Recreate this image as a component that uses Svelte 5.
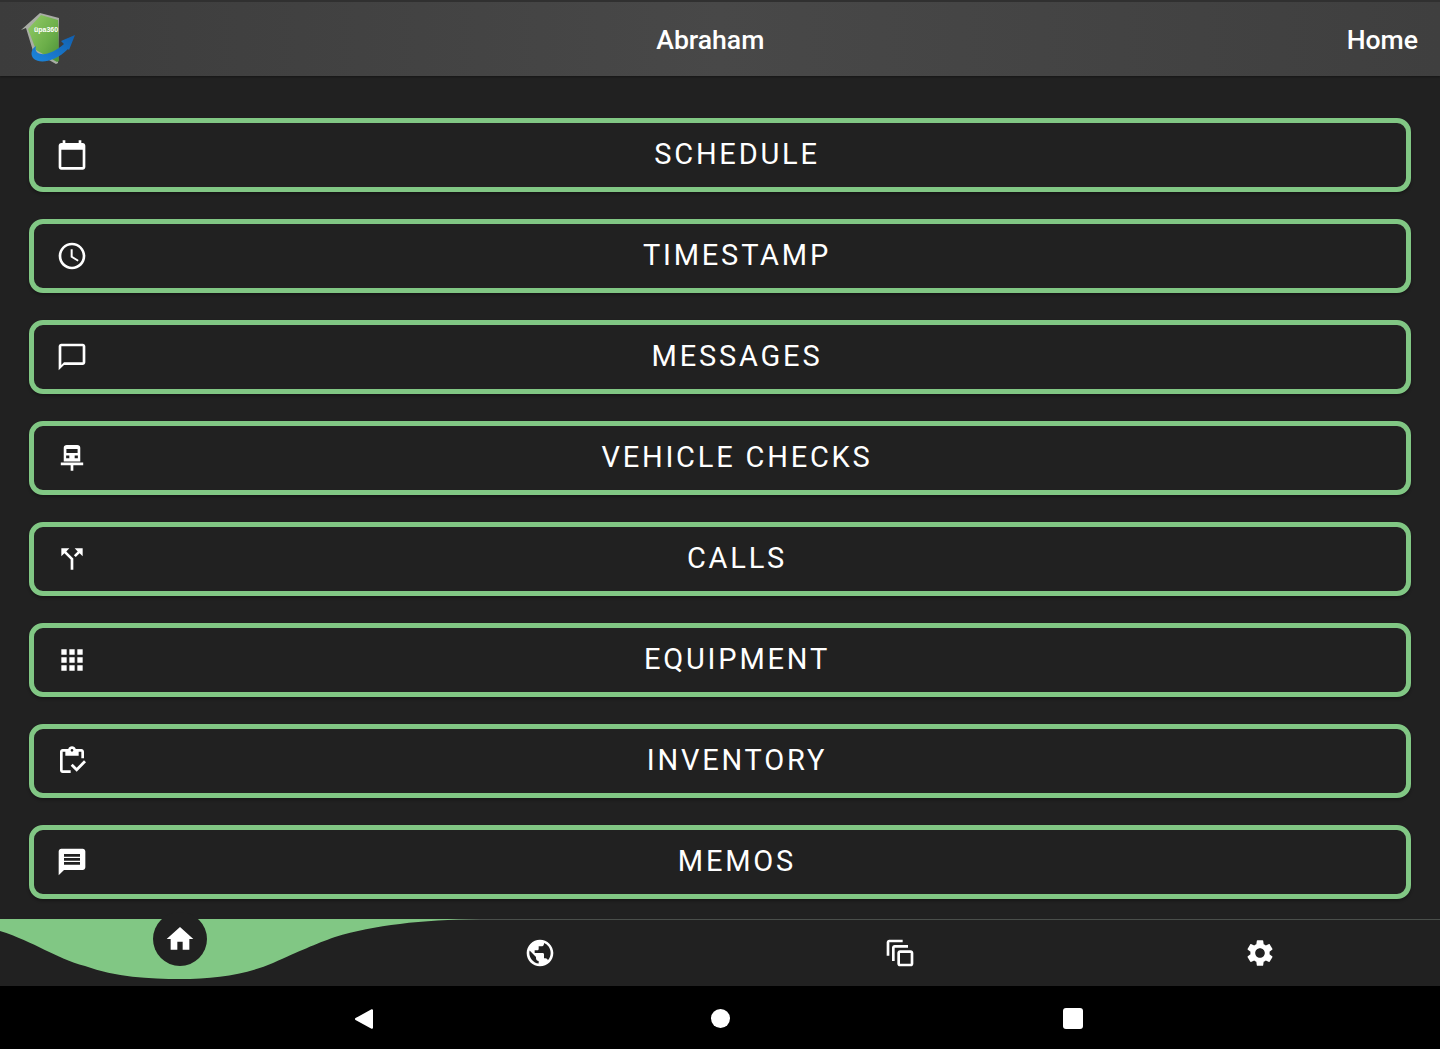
<script>
  const rows = [
    { label: 'SCHEDULE', d: 'M20 3h-1V1h-2v2H7V1H5v2H4c-1.1 0-2 .9-2 2v16c0 1.1.9 2 2 2h16c1.1 0 2-.9 2-2V5c0-1.1-.9-2-2-2zm0 18H4V8h16v13z' },
    { label: 'TIMESTAMP', d: 'M11.99 2C6.47 2 2 6.48 2 12s4.47 10 9.99 10C17.52 22 22 17.52 22 12S17.52 2 11.99 2zM12 20c-4.42 0-8-3.58-8-8s3.58-8 8-8 8 3.58 8 8-3.58 8-8 8zm.5-13H11v6l5.25 3.15.75-1.23-4.5-2.67z' },
    { label: 'MESSAGES', d: 'M20 2H4c-1.1 0-2 .9-2 2v18l4-4h14c1.1 0 2-.9 2-2V4c0-1.1-.9-2-2-2zm0 14H6l-2 2V4h16v12z' },
    { label: 'VEHICLE CHECKS', d: 'M8 2.3h8c1.2 0 2.2.8 2.2 2V14.7H5.8V4.3c0-1.2 1-2 2.2-2zM7.8 5.3v3h8.4v-3zM7.6 10.2v1.9h2.4v-1.9zM14 10.2v1.9h2.4v-1.9zM3.6 15.4h16.8v2h-7.4v4.2h-2v-4.2H3.6z' },
    { label: 'CALLS', d: 'M14 4l2.29 2.29-2.88 2.88 1.42 1.42 2.88-2.88L20 10V4zm-4 0H4v6l2.29-2.29 4.71 4.7V20h2v-8.41l-5.29-5.3z' },
    { label: 'EQUIPMENT', d: 'M4 8h4V4H4v4zm6 12h4v-4h-4v4zm-6 0h4v-4H4v4zm0-6h4v-4H4v4zm6 0h4v-4h-4v4zm6-10v4h4V4h-4zm-6 4h4V4h-4v4zm6 6h4v-4h-4v4zm0 6h4v-4h-4v4z' },
    { label: 'INVENTORY', d: 'M5 5h2v3h10V5h2v5h2V5c0-1.1-.9-2-2-2h-4.18C14.4 1.84 13.3 1 12 1s-2.4.84-2.82 2H5c-1.1 0-2 .9-2 2v14c0 1.1.9 2 2 2h6v-2H5V5zm7-2c.55 0 1 .45 1 1s-.45 1-1 1-1-.45-1-1 .45-1 1-1zM21 11.5L15.51 17l-3.01-3-1.5 1.5 4.51 4.5 6.99-7z' },
    { label: 'MEMOS', d: 'M20 2H4c-1.1 0-1.99.9-1.99 2L2 22l4-4h14c1.1 0 2-.9 2-2V4c0-1.1-.9-2-2-2zm-2 12H6v-2h12v2zm0-3H6V9h12v2zm0-3H6V6h12v2z' }
  ];
  const tabs = [
    { d: 'M12 2C6.48 2 2 6.48 2 12s4.48 10 10 10 10-4.48 10-10S17.52 2 12 2zm-1 17.93c-3.95-.49-7-3.85-7-7.93 0-.62.08-1.21.21-1.79L9 15v1c0 1.1.9 2 2 2v1.93zm6.9-2.54c-.26-.81-1-1.39-1.9-1.39h-1v-3c0-.55-.45-1-1-1H8v-2h2c.55 0 1-.45 1-1V7h2c1.1 0 2-.9 2-2v-.41c2.93 1.19 5 4.06 5 7.41 0 2.08-.8 3.97-2.1 5.39z' },
    { d: 'M14 2H4c-1.1 0-2 .9-2 2v10h2V4h10V2zm4 4H8c-1.1 0-2 .9-2 2v10h2V8h10V6zm2 4h-8c-1.1 0-2 .9-2 2v8c0 1.1.9 2 2 2h8c1.1 0 2-.9 2-2v-8c0-1.1-.9-2-2-2zm0 10h-8v-8h8v8z' },
    { d: 'M19.14 12.94c.04-.3.06-.61.06-.94 0-.32-.02-.64-.07-.94l2.03-1.58c.18-.14.23-.41.12-.61l-1.92-3.32c-.12-.22-.37-.29-.59-.22l-2.39.96c-.5-.38-1.03-.7-1.62-.94l-.36-2.54c-.04-.24-.24-.41-.48-.41h-3.84c-.24 0-.43.17-.47.41l-.36 2.54c-.59.24-1.13.57-1.62.94l-2.39-.96c-.22-.08-.47 0-.59.22L2.74 8.87c-.12.21-.08.47.12.61l2.03 1.58c-.05.3-.09.63-.09.94s.02.64.07.94l-2.03 1.58c-.18.14-.23.41-.12.61l1.92 3.32c.12.22.37.29.59.22l2.39-.96c.5.38 1.03.7 1.62.94l.36 2.54c.05.24.24.41.48.41h3.84c.24 0 .44-.17.47-.41l.36-2.54c.59-.24 1.13-.56 1.62-.94l2.39.96c.22.08.47 0 .59-.22l1.92-3.32c.12-.22.07-.47-.12-.61l-2.01-1.58zM12 15.6c-1.98 0-3.6-1.62-3.6-3.6s1.62-3.6 3.6-3.6 3.6 1.62 3.6 3.6-1.62 3.6-3.6 3.6z' }
  ];
</script>

<div class="screen">
  <header class="toolbar">
    <svg class="logo" viewBox="20 11 56 56" width="56" height="56" aria-hidden="true">
      <defs>
        <linearGradient id="shield" x1="0" y1="0" x2="1" y2="1">
          <stop offset="0" stop-color="#93cb66" />
          <stop offset="0.6" stop-color="#6bae49" />
          <stop offset="1" stop-color="#4a8f38" />
        </linearGradient>
        <linearGradient id="swoosh" x1="0" y1="1" x2="1" y2="0">
          <stop offset="0" stop-color="#1c86dc" />
          <stop offset="1" stop-color="#125fae" />
        </linearGradient>
      </defs>
      <path d="M40 13 L21 30 L26 28 L33 51 L56 64 L58 63 L59 18 Z" fill="#a9ada5" />
      <path d="M41 15 L58 20 L59 61 L57 62 L36 50 L28 29 Z" fill="url(#shield)" />
      <text x="34" y="32" class="logo-text">üpa360</text>
      <path d="M75 35 L61 41 L64 44 C56 51 47 55 41 54 C36 53 35 50 36 46 C31 49 30 55 34 59 C40 64 55 62 68 49 L69 50 Z" fill="url(#swoosh)" />
    </svg>
    <div class="title">Abraham</div>
    <div class="action">Home</div>
  </header>

  <main class="list">
    {#each rows as row}
      <button class="row" type="button">
        <svg class="icon" viewBox="0 0 24 24" aria-hidden="true"><path d={row.d} /></svg>
        <span class="label">{row.label}</span>
      </button>
    {/each}
  </main>

  <nav class="tabs">
    <svg class="wave" viewBox="0 0 480 67" width="480" height="67" aria-hidden="true">
      <path d="M0 0H480C420 1 375 6 335 18C315 25 300 32 273 44C245 56 215 60 180 60C150 60 115 58 85 47C55 39 35 23 0 12Z" />
    </svg>
    <div class="tab">
      <div class="home">
        <svg class="icon" viewBox="0 0 24 24" aria-hidden="true"><path d="M10 20v-6h4v6h5v-8h3L12 3 2 12h3v8z" /></svg>
      </div>
    </div>
    {#each tabs as tab}
      <div class="tab">
        <svg class="icon" viewBox="0 0 24 24" aria-hidden="true"><path d={tab.d} /></svg>
      </div>
    {/each}
  </nav>

  <div class="system">
    <div class="sys-slot left">
      <svg viewBox="0 0 20 22" width="20" height="22" aria-hidden="true"><path d="M18 2.2 V19.8 L2 11 Z" fill="#fff" stroke="#fff" stroke-width="2" stroke-linejoin="round" /></svg>
    </div>
    <div class="sys-circle"></div>
    <div class="sys-slot right"><div class="sys-square"></div></div>
  </div>
</div>

<style>
  :global(body) {
    margin: 0;
    background: #212121;
  }
  .screen {
    width: 1440px;
    height: 1049px;
    display: flex;
    flex-direction: column;
    overflow: hidden;
    background: #212121;
    font-family: Roboto, "Liberation Sans", sans-serif;
    color: #fff;
  }
  .toolbar {
    height: 74px;
    flex: none;
    display: flex;
    align-items: center;
    padding-right: 22px;
    padding-left: 20px;
    border-top: 2px solid #303030;
    background: linear-gradient(90deg, #3c3c3c 0%, #484848 50%, #3f3f3f 100%);
    box-shadow: 0 1px 2px rgba(0, 0, 0, 0.35);
    position: relative;
    z-index: 1;
  }
  .logo {
    flex: none;
  }
  .logo-text {
    font-family: "Liberation Sans", sans-serif;
    font-size: 7px;
    font-weight: 700;
    fill: #fff;
  }
  .title {
    flex: 1;
    padding-right: 2px;
    text-align: center;
    font-size: 26.6px;
    font-weight: 500;
  }
  .action {
    font-size: 26.6px;
    font-weight: 500;
  }
  .list {
    flex: 1;
    min-height: 0;
    display: flex;
    flex-direction: column;
    gap: 27px;
    padding: 42px 29px 0;
  }
  .row {
    flex: none;
    height: 73.95px;
    box-sizing: border-box;
    display: flex;
    align-items: center;
    padding: 0 20.5px 0 21.5px;
    background: transparent;
    border: 5px solid #81c784;
    border-radius: 14px;
    box-shadow: 0 2px 3px rgba(0, 0, 0, 0.3);
    color: #fff;
    font: inherit;
  }
  .icon {
    width: 32px;
    height: 32px;
    flex: none;
    fill: #fff;
    fill-rule: evenodd;
    display: block;
  }
  .label {
    flex: 1;
    text-align: center;
    font-size: 29px;
    letter-spacing: 2.8px;
    line-height: 1;
    padding-bottom: 1px;
    padding-left: 1px;
  }
  .tabs {
    height: 66px;
    flex: none;
    border-top: 1px solid #4a4f4b;
    display: grid;
    grid-template-columns: repeat(4, 1fr);
    align-items: center;
    justify-items: center;
    position: relative;
  }
  .wave {
    position: absolute;
    left: 0;
    top: -1px;
  }
  .wave path {
    fill: #81c784;
  }
  .tab {
    position: relative;
  }
  .home {
    width: 54px;
    height: 54px;
    border-radius: 50%;
    background: #212121;
    display: flex;
    align-items: center;
    justify-content: center;
    transform: translateY(-14px);
  }
  .system {
    height: 63px;
    box-sizing: border-box;
    padding-top: 2px;
    flex: none;
    background: #000;
    display: grid;
    grid-template-columns: 1fr auto 1fr;
    align-items: center;
  }
  .sys-slot {
    display: flex;
    align-items: center;
  }
  .sys-slot.left {
    justify-content: flex-end;
    padding-right: 336px;
  }
  .sys-slot.right {
    justify-content: flex-start;
    padding-left: 333px;
  }
  .sys-circle {
    width: 19px;
    height: 19px;
    margin-left: 1px;
    border-radius: 50%;
    background: #fff;
  }
  .sys-square {
    width: 20px;
    height: 21px;
    border-radius: 3px;
    background: #fff;
  }
</style>
